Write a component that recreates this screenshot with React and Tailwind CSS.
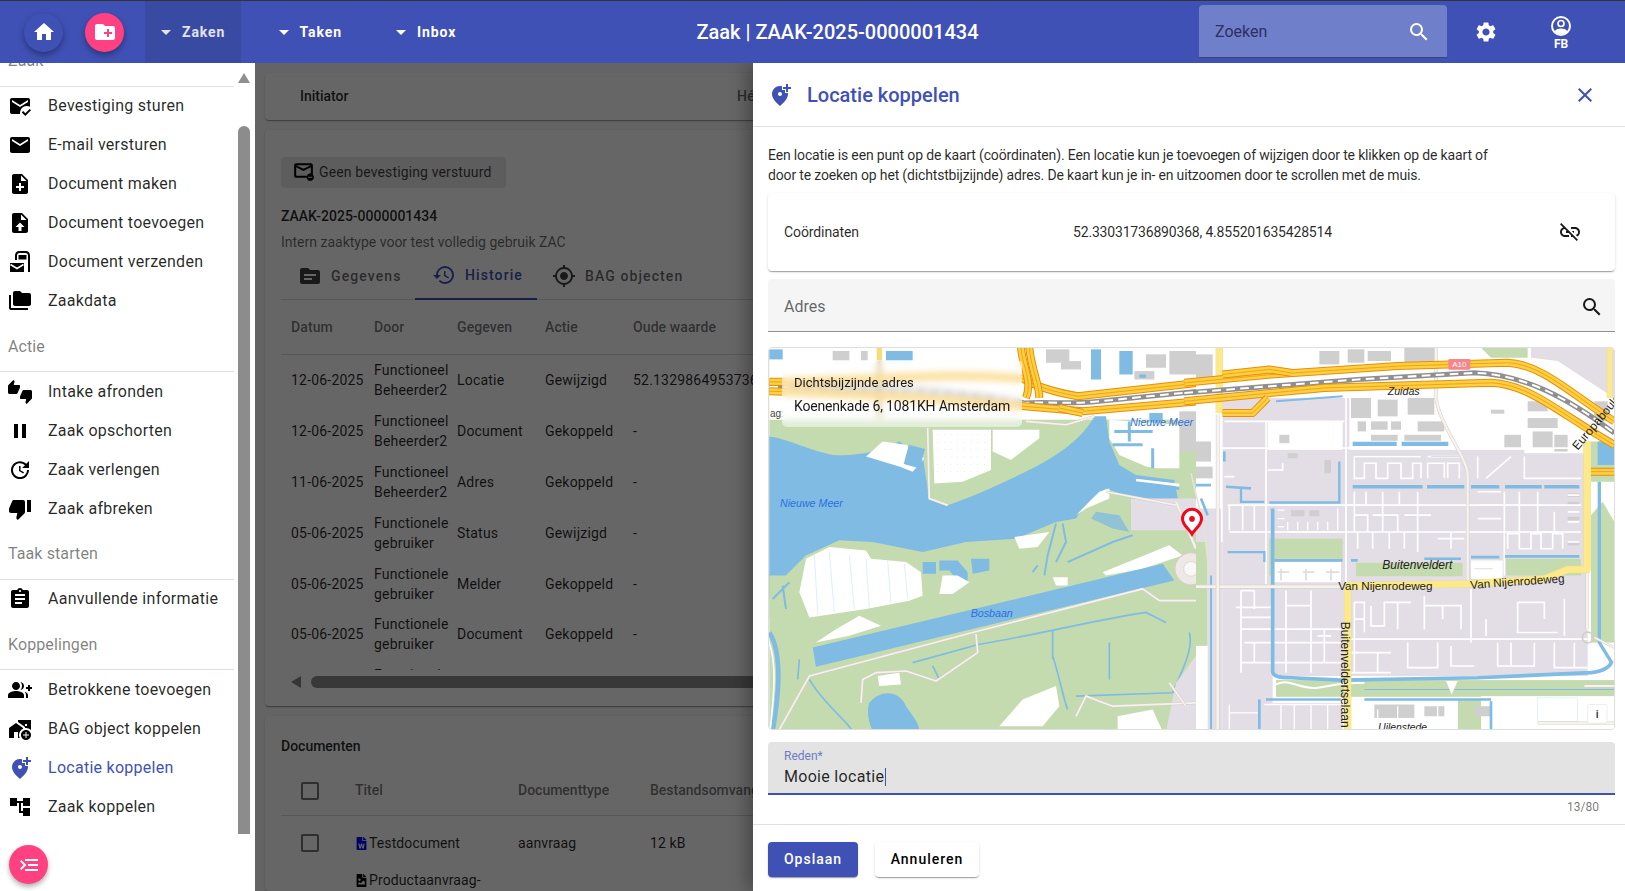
import React from "react";
import {
  MdHome, MdCreateNewFolder, MdMarkEmailRead, MdEmail, MdNoteAdd, MdFolderCopy,
  MdThumbsUpDown, MdPause, MdUpdate, MdThumbDown, MdAssignment, MdGroupAdd, MdAddHomeWork, MdAddLocationAlt,
  MdAccountTree, MdMenuOpen, MdSettings, MdSearch, MdClose, MdLinkOff, MdArrowDropDown,
  MdTopic, MdHistory, MdGpsFixed, MdOutlineUnsubscribe,
} from "react-icons/md";
import { FaFileWord, FaFileImage } from "react-icons/fa";

const W = "#7fbbe3", G = "#c4dbb0", L = "#e3dde6", B = "#cfcfcf";

function UploadDoc({ className }) {
  return (
    <svg viewBox="0 0 24 24" className={className} fill="currentColor">
      <path fillRule="evenodd" d="M14 2H6c-1.1 0-1.99.9-1.99 2L4 20c0 1.1.89 2 1.99 2H18c1.1 0 2-.9 2-2V8l-6-6zm-1 7V3.5L18.5 9H13z M12 11.5 L16.5 16 H13.5 V20 H10.5 V16 H7.5 Z" />
    </svg>
  );
}
function SendDoc({ className }) {
  return (
    <svg viewBox="0 0 24 24" className={className}>
      <path d="M8 10 V6 C8 3.5 9.5 2 11.5 2 H17.5 C19.5 2 21 3.5 21 6 V22" fill="none" stroke="currentColor" strokeWidth="2" />
      <path d="M10.5 5 H18.5 V9.5 H10.5 Z" fill="currentColor" />
      <path d="M2 13 H16 V22 H2 Z" fill="currentColor" />
      <path d="M2.5 14.5 L9 18.5 L15.5 14.5" fill="none" stroke="#fff" strokeWidth="1.5" />
    </svg>
  );
}
function Account({ className }) {
  return (
    <svg viewBox="0 0 24 24" className={className} fill="none" stroke="currentColor">
      <circle cx="12" cy="12" r="9" strokeWidth="2" />
      <circle cx="12" cy="9.5" r="3" strokeWidth="1.7" />
      <path d="M5.5 17.2 C7 15.2 9.5 14.5 12 14.5 S17 15.2 18.5 17.2 C17 19.5 14.5 20.5 12 20.5 S7 19.5 5.5 17.2Z" fill="currentColor" stroke="none" />
    </svg>
  );
}

function Motorway({ d }) {
  return (
    <g fill="none" strokeLinejoin="round">
      <path d={d} stroke="#ea8c0e" strokeWidth="24" />
      <path d={d} stroke="#fdd03f" strokeWidth="18" />
      <path d={d} stroke="#ea8c0e" strokeWidth="2" />
    </g>
  );
}
function Rail({ d }) {
  return (
    <g fill="none">
      <path d={d} stroke="#8f8f8f" strokeWidth="15" />
      <path d={d} stroke="#ffffff" strokeWidth="6" strokeDasharray="26 16" />
    </g>
  );
}
function Road({ d, w = 5 }) {
  return (
    <g fill="none" strokeLinejoin="round">
      <path d={d} stroke="#d6cdc6" strokeWidth={w + 3} />
      <path d={d} stroke="#f6f2ee" strokeWidth={w} />
    </g>
  );
}
function Yellow({ d, w = 18 }) {
  return (
    <g fill="none" strokeLinejoin="round">
      <path d={d} stroke="#e9d98a" strokeWidth={w + 2} />
      <path d={d} stroke="#fbe98c" strokeWidth={w} />
    </g>
  );
}

function rects(list, fill) {
  return list.map((r, i) => <rect key={i} x={r[0]} y={r[1]} width={r[2]} height={r[3]} fill={fill} />);
}

const streetsRight = [
  "M90,320 H1170", "M110,490 H1170", "M115,570 H1170", "M100,240 H460", "M225,240 V725", "M465,160 V740",
  "M115,490 V565", "M155,490 V565", "M190,490 V565", "M230,385 H275 V365", "M100,405 H130", "M490,345 H690", "M710,345 H810",
  "M490,345 V410 H520 V365 H555 V410 H590 V365 H630 V410 H665 V365 H690 V410", "M710,410 V365 H760 V410 M770,410 V365 H805 V410",
  "M860,345 V410 M885,410 L960,345 M1000,345 V410 H1170", "M525,450 V490 M575,450 V490 M625,450 V490 M680,450 V490",
  "M490,450 V570 M490,520 H530 V570 M575,490 V570 M545,520 H620 V570 M680,490 V630 M640,520 H720",
  "M500,570 V620 M545,570 V620 M595,570 V620 M640,570 V620 M740,590 H820 M780,570 V620",
  "M860,450 H930 M860,490 H930 M860,530 H930 M940,450 V700 M985,450 V570 M1040,450 V570 H1100 M1090,510 V570 M1130,460 H1165 M1130,510 H1165 M1130,540 H1165 M1130,600 H1165",
  "M950,620 V575 H985 V620 H1020 V575 H1050 V620 H1085 V575 H1115 V620",
  "M150,745 V990 M230,795 H150 M135,795 H240 M150,860 H450 M150,825 H240 M190,745 H150 M190,745 V800 M285,745 V990 M285,790 H360 M360,745 V990 M160,900 H450 M190,900 V960 M150,960 H450 M400,860 V960 M380,880 H420",
  "M490,780 H520 V870 M490,780 V990 M490,830 H520 M540,790 V850 H580 V780 H660 M620,780 V860 M700,760 V860 M700,790 H810 V860 M755,790 V830 M840,740 V900 M980,780 H1060 V830 M980,780 V870 H1100 M1120,770 V880 M885,830 V880",
  "M480,890 H1190 M480,930 H600 M560,930 V990 M650,900 V975 H740 V900 M780,910 V970 H850 M920,900 V970 H1030 V900 M1090,900 V975 H1190 M960,900 V970 M1150,900 V975 M480,990 H600",
];
const canalsRight = [
  ["M485,435 H695 M708,435 H820 M840,435 H925 M942,435 H1052 M1060,435 H1165", 11],
  ["M485,307 H617 M632,307 H772", 13],
  ["M250,655 H455 M480,655 H500 M700,650 H810 M840,645 H925 M942,643 H1165", 8],
  ["M245,500 V985 C245,1000 260,1005 300,1005 L450,1012 L860,1005 L1200,990 C1240,985 1260,970 1262,955", 11],
  ["M60,700 V1165", 6],
  ["M110,630 H220 V660", 7],
  ["M150,440 V480 H220 M235,482 H445 V360", 7],
  ["M100,330 V360 M105,435 L180,440", 8],
  ["M1225,420 V900 L1262,960", 10],
  ["M225,1070 H450 M520,1070 H900", 8],
  ["M205,1070 V1165 M900,1075 V1165", 8],
  ["M255,180 L455,165", 6],
];

function MapSvg() {
  return (
    <svg viewBox="0 0 845 379" className="block h-full w-full" preserveAspectRatio="none" style={{ fontFamily: '"Liberation Sans", sans-serif' }}>
      <rect width="845" height="379" fill="#fff" />
      <g transform="translate(-3,-7) scale(0.33333)">
        <rect x="10" y="20" width="1290" height="1145" fill={G} />
        <rect x="10" y="20" width="1290" height="215" fill="#fff" />
        {rects([[200, 30, 50, 30], [285, 30, 20, 30], [840, 25, 70, 40], [885, 60, 60, 25], [1140, 40, 60, 40], [1210, 30, 80, 70], [1240, 210, 50, 120], [1105, 90, 60, 25]], B)}
        {rects([[10, 25, 40, 30], [360, 30, 80, 30], [975, 25, 30, 90], [1060, 30, 40, 70], [1120, 100, 20, 10], [1150, 215, 40, 25]], W)}
        <path d="M10,285 C60,290 110,320 200,340 C270,345 340,330 400,300 L470,345 L490,470 L545,490 C640,460 760,400 800,380 C880,340 950,290 985,225 L1020,225 L1030,300 L1060,370 L1110,400 L1225,415 L1240,495 L1100,470 L1020,440 C970,470 950,500 930,530 L870,540 L750,590 L600,600 L470,630 L320,600 L220,595 L120,640 L60,700 L10,770 Z" fill={W} />
        <path d="M1030,235 L1240,250 L1240,380 L1170,380 L1140,375 L1060,340 L1030,290 Z" fill="#fff" />
        <path d="M1045,270 H1160 M1040,310 H1130 M1090,240 V300 M1160,320 V380 M1110,425 L1240,440" stroke={W} strokeWidth="9" fill="none" />
        <path d="M1110,415 L1240,430" stroke="#fff" strokeWidth="8" fill="none" />
        <path d="M500,265 H675 V385 L590,420 L505,425 Z M680,265 H820 V290 L735,355 L680,330 Z" fill="#fff" />
        <g fill="#c4cdc4">
          {Array.from({ length: 48 }).map((_, i) => (
            <circle key={i} cx={515 + (i % 8) * 20} cy={280 + Math.floor(i / 8) * 22} r="1.2" />
          ))}
        </g>
        <path d="M300,345 L350,300 L420,310 L475,350 L440,390 L400,375 Z" fill="#fff" />
        <rect x="420" y="315" width="50" height="60" fill={W} transform="rotate(15 445 345)" />
        <path d="M120,650 L190,615 L300,625 L315,650 L420,660 L465,690 L470,760 L430,775 L300,800 L130,825 L100,750 Z" fill="#fff" />
        <path d="M145,635 L155,815 M190,630 L205,810 M250,640 L265,800 M300,650 L310,795 M365,655 L375,785 M415,665 L425,770" stroke="#cfe5f3" strokeWidth="2" fill="none" />
        <path d="M470,660 H510 V695 H470 Z M520,655 H575 L605,690 V715 H575 L550,685 H520 Z M615,650 H670 V685 L620,695 Z" fill={W} />
        <path d="M530,700 H575 L610,720 L560,755 H520 Z M745,585 L850,570 L815,615 L760,620 Z M860,705 H905 V730 H870 Z M1010,690 L1110,650 L1210,610 L1250,640 L1130,680 L1020,700 Z M150,900 L210,860 L280,820 L345,850 L250,880 Z M930,520 L1000,450 L1030,440 L1030,470 L960,500 Z" fill="#fff" />
        <path d="M870,545 L845,640 L835,700 M890,545 L900,600 L870,660 M905,660 L1040,600 L1100,580 M800,690 L815,670" stroke={W} strokeWidth="6" fill="none" />
        <path d="M975,530 L1040,560 L1090,570 L1060,520 L990,510 Z" fill={W} opacity="0.75" />
        <path d="M140,915 L1190,665 L1225,715 L150,972 Z" fill={W} />
        <path d="M640,905 C800,880 1000,830 1140,810 L1200,840 M860,860 V950 M440,960 L640,905 M860,940 C880,1000 890,1060 905,1100 M1030,900 V1010 M1270,870 C1285,920 1240,1000 1220,1050 L930,1060 M130,1010 C170,1080 240,1130 260,1165 M500,970 L520,1010 M100,950 L95,1010" stroke={W} strokeWidth="5" fill="none" />
        <path d="M10,870 C50,930 40,1050 20,1165" stroke={W} strokeWidth="14" fill="none" />
        <path d="M0,880 C35,940 25,1050 12,1165" stroke="#fff" strokeWidth="5" fill="none" />
        <path d="M10,700 L60,700 L90,670 L60,800 L10,830 Z" fill={G} />
        <path d="M20,770 L70,720 M50,730 L60,800" stroke={W} strokeWidth="6" fill="none" />
        <path d="M310,1080 C340,1040 400,1040 420,1090 C440,1120 460,1140 460,1165 L320,1165 C310,1140 300,1110 310,1080 Z" fill={W} />
        <path d="M335,1000 L400,990 L405,1025 L340,1030 Z M700,1150 L770,1070 L870,1030 L880,1090 L830,1150 Z M1055,1120 L1160,1100 L1190,1165 L1055,1165 Z M1270,1120 L1290,1120 L1290,1165 L1270,1165 Z" fill="#fff" />
        <path d="M1230,1020 L1290,940 L1290,1165 L1200,1165 Z" fill={L} />
        <rect x="1095" y="470" width="195" height="95" fill={L} />
        <Road d="M40,1160 L130,1000 L620,870 L1130,740 L1180,775 L1290,775" />
        <Road d="M630,875 L635,930 L510,1015 L420,985 L330,990 L290,1010 L285,1080" />
        <Road d="M485,260 L490,470 L545,490" />
        <Road d="M1230,480 L1290,620" w={7} />
        <Road d="M1020,450 L1230,490" />
        <Road d="M930,1120 L960,1060 L1040,1090 L1290,1080" />
        <Road d="M1210,1020 L1260,1090 M780,240 L900,250 L985,225" />
        <circle cx="1275" cy="680" r="48" fill="#eee9e4" stroke="#d6cdc6" strokeWidth="3" />
        <circle cx="1275" cy="680" r="22" fill="#f8f8f8" stroke="#d6cdc6" strokeWidth="2" />
        <path d="M340,20 V230" stroke="#f5dd7a" strokeWidth="16" fill="none" />
        <path d="M340,60 V225" stroke="#555" strokeWidth="8" fill="none" opacity="0.6" />
        <Rail d="M10,137 C200,140 500,130 775,185 C850,180 900,190 1000,180 L1300,150" />
        <Motorway d="M10,122 C200,125 500,90 770,112 C800,130 850,150 935,165 L1300,125" />
        <Motorway d="M10,150 C200,155 500,170 775,195 L950,210 L1300,180" />
        <Motorway d="M790,20 C795,80 820,130 820,170" />
        <Motorway d="M765,20 C770,80 800,120 780,170" />
        <Motorway d="M880,200 L950,215" />
        <text x="12" y="228" fontSize="30" fill="#444">ag:</text>
        <text x="42" y="497" fontSize="32" fontStyle="italic" fill="#2e6fe0">Nieuwe Meer</text>
        <text x="1093" y="255" fontSize="32" fontStyle="italic" fill="#2e6fe0">Nieuwe Meer</text>
        <text x="614" y="823" fontSize="32" fontStyle="italic" fill="#2e6fe0">Bosbaan</text>
      </g>
      <g transform="translate(422,-7) scale(0.33333)">
        <rect x="15" y="20" width="1255" height="1145" fill="#fff" />
        <rect x="15" y="500" width="75" height="100" fill={L} />
        <rect x="15" y="600" width="35" height="310" fill={G} />
        <rect x="50" y="600" width="45" height="560" fill={L} />
        <rect x="15" y="240" width="50" height="250" fill="#fff" />
        <rect x="95" y="170" width="1095" height="830" fill={L} />
        <rect x="95" y="1000" width="150" height="165" fill={L} />
        <rect x="100" y="1080" width="355" height="85" fill={L} />
        <rect x="1200" y="300" width="70" height="600" fill={G} />
        <path d="M1200,420 H1270 V540 L1235,480 L1200,520 Z" fill="#fff" />
        <path d="M1200,900 L1262,960 L1200,985 Z" fill="#fff" />
        <rect x="1220" y="300" width="50" height="70" fill={W} />
        <rect x="230" y="240" width="225" height="85" fill="#fff" />
        <rect x="475" y="170" width="530" height="155" fill="#fff" />
        <rect x="775" y="150" width="225" height="130" fill="#fff" />
        <rect x="1000" y="170" width="190" height="165" fill="#fff" />
        <path d="M1020,20 H1270 V170 L1100,60 L1020,50 Z" fill={L} />
        <path d="M870,20 H1010 V50 H900 Z" fill={G} />
        <rect x="250" y="590" width="205" height="60" fill={G} />
        <rect x="235" y="590" width="12" height="110" fill={G} />
        <rect x="495" y="662" width="320" height="40" fill={G} />
        <rect x="945" y="650" width="225" height="50" fill={G} />
        <rect x="250" y="660" width="200" height="60" fill="#fff" />
        <rect x="840" y="655" width="95" height="55" fill="#fff" />
        <rect x="255" y="1012" width="1015" height="50" fill={G} />
        <rect x="800" y="1070" width="120" height="95" fill={G} />
        <rect x="520" y="1075" width="280" height="90" fill="#fff" />
        <rect x="870" y="1060" width="400" height="105" fill="#fff" />
        <rect x="1040" y="1065" width="120" height="70" fill="#fff" stroke="#dcebf5" strokeWidth="2" />
        <path d="M255,1025 C300,1005 320,1040 380,1035 C420,1030 440,1020 520,1020" stroke="#fff" strokeWidth="6" fill="none" />
        <path d="M520,1040 H1270" stroke={W} strokeWidth="3" fill="none" />
        <path d="M765,1015 L782,1055 L800,1015 Z" fill="#fff" />
        {rects([[15, 40, 50, 70], [15, 300, 45, 60], [15, 375, 50, 35], [265, 280, 30, 25], [385, 30, 60, 40], [470, 25, 50, 40], [530, 30, 70, 30], [640, 20, 90, 60], [1210, 180, 40, 60], [480, 170, 60, 60], [560, 175, 60, 50], [650, 170, 80, 50], [500, 240, 25, 30], [540, 240, 50, 25], [600, 240, 30, 25], [680, 240, 80, 30], [540, 280, 80, 18], [640, 280, 110, 18], [1010, 180, 60, 30], [1090, 280, 40, 50], [1025, 270, 60, 50], [940, 280, 50, 40], [1010, 230, 90, 30], [900, 205, 40, 12], [290, 335, 30, 15], [400, 355, 20, 40], [1130, 455, 35, 10], [1130, 480, 35, 10], [1130, 525, 35, 10], [1130, 600, 35, 10], [300, 505, 40, 18], [355, 505, 30, 18], [550, 1085, 120, 40], [700, 1090, 60, 30], [850, 1090, 50, 30]], B)}
        {streetsRight.map((d, i) => (
          <path key={i} d={d} stroke="#fff" strokeWidth="5" fill="none" />
        ))}
        <path d="M260,505 H280 M260,530 H280 M260,555 H280 M290,570 H440 M290,540 V565 M320,540 V565 M350,540 V565 M380,540 V565 M410,540 V565 M440,500 V565" stroke="#fff" strokeWidth="4" fill="none" />
        <path d="M260,690 H295 M335,690 H370 M405,690 H445 M270,680 V715 M345,680 V715 M420,680 V715" stroke="#ddd" strokeWidth="5" fill="none" />
        <path d="M490,340 H690 M490,350 H690 M720,345 H810 M850,680 H905" stroke="#dedede" strokeWidth="3" fill="none" />
        <path d="M115,1085 V1165 M115,1110 H205 M220,1085 H450 M270,1085 V1165 M310,1085 V1165 M360,1085 V1165 M410,1085 V1165 M560,1100 V1165 M620,1090 V1165 M680,1090 V1165 M740,1090 V1165" stroke="#fff" strokeWidth="4" fill="none" />
        {canalsRight.map(([d, w], i) => (
          <path key={i} d={d} stroke={W} strokeWidth={w} fill="none" />
        ))}
        <path d="M0,395 L40,560 L55,700" stroke="#e7e1dc" strokeWidth="5" fill="none" />
        <path d="M15,430 H60 M30,470 L50,520" stroke={W} strokeWidth="8" fill="none" />
        <Road d="M15,733 H455" w={8} />
        <Road d="M80,220 V1165" w={8} />
        <Road d="M735,20 V170 C745,250 830,350 830,400 V720" w={7} />
        <Road d="M1188,680 V860 M1180,1030 H1270 M1040,1140 H1270" w={6} />
        <circle cx="1190" cy="885" r="16" fill="none" stroke="#d6cdc6" strokeWidth="5" />
        <Road d="M1210,885 L1270,915" w={5} />
        <Yellow d="M85,20 V215" w={20} />
        <Yellow d="M1256,20 V170" w={15} />
        <Yellow d="M1188,300 V682 H1130 L1060,710 L830,725 L470,730 V1165" w={20} />
        <Rail d="M-20,155 L500,115 L850,95 C1000,100 1130,170 1270,275" />
        <Motorway d="M-20,125 L240,100 L620,75 L950,65 C1050,70 1130,150 1270,240" />
        <Motorway d="M-20,180 L400,140 L900,125 C1020,130 1110,220 1270,310" />
        <Motorway d="M95,100 L235,85 L300,95" />
        <Motorway d="M230,170 L185,215 H95" />
        <Motorway d="M1200,390 H1270" />
        <rect x="772" y="54" width="66" height="32" rx="4" fill="#f7858b" />
        <text x="805" y="79" textAnchor="middle" fontSize="24" fill="#fff">A10</text>
        <g fill="#222">
          <text x="638" y="162" textAnchor="middle" fontStyle="italic" fontSize="32">Zuidas</text>
          <text x="679" y="680" textAnchor="middle" fontStyle="italic" fontSize="36">Buitenveldert</text>
          <text x="583" y="742" textAnchor="middle" fontSize="35">Van Nijenrodeweg</text>
          <text x="980" y="730" textAnchor="middle" fontSize="35" transform="rotate(-4 980 730)">Van Nijenrodeweg</text>
          <text transform="translate(450,838) rotate(90)" fontSize="36">Buitenveldertselaan</text>
          <text transform="translate(1160,328) rotate(-50)" fontSize="36">Europaboulevard</text>
          <text x="635" y="1163" textAnchor="middle" fontStyle="italic" fontSize="31">Uilenstede</text>
        </g>
        <rect x="1190" y="1085" width="58" height="56" rx="5" fill="#fff" stroke="#e4e4e4" strokeWidth="2" />
        <text x="1219" y="1124" textAnchor="middle" fontSize="34" fill="#333" fontFamily="Roboto, sans-serif" fontWeight="500">i</text>
      </g>
      <g transform="translate(423,161)">
        <path d="M0,24 C-3,19 -9.5,15 -9.5,9 A9.5,9.5 0 1 1 9.5,9 C9.5,15 3,19 0,24 Z" fill="#fff" stroke="#ee0a1c" strokeWidth="3" />
        <circle cx="0" cy="9" r="2.8" fill="#ee0a1c" />
      </g>
    </svg>
  );
}

function SectionHead({ children }) {
  return (
    <div className="h-[51.5px] border-b border-[#e0e0e0] pl-[8px] pt-[16px] text-[16px] leading-[20px] tracking-[0.1px] text-black/50">
      {children}
    </div>
  );
}
function Item({ icon: Icon, children, active }) {
  return (
    <div className={`flex h-[39px] items-center gap-[16px] pl-[8px] text-[16px] tracking-[0.27px] ${active ? "text-[#3f51b5]" : "text-black/85"}`}>
      <Icon className={`size-[24px] shrink-0 ${active ? "text-[#3f51b5]" : "text-black"}`} />
      <span className="whitespace-nowrap">{children}</span>
    </div>
  );
}

function Sidebar() {
  return (
    <aside className="relative z-10 flex w-[255px] shrink-0 overflow-hidden bg-white">
      <div className="-mt-[28px] w-[234px] shrink-0">
        <SectionHead>Zaak</SectionHead>
        <Item icon={MdMarkEmailRead}>Bevestiging sturen</Item>
        <Item icon={MdEmail}>E-mail versturen</Item>
        <Item icon={MdNoteAdd}>Document maken</Item>
        <Item icon={UploadDoc}>Document toevoegen</Item>
        <Item icon={SendDoc}>Document verzenden</Item>
        <Item icon={MdFolderCopy}>Zaakdata</Item>
        <SectionHead>Actie</SectionHead>
        <Item icon={MdThumbsUpDown}>Intake afronden</Item>
        <Item icon={MdPause}>Zaak opschorten</Item>
        <Item icon={MdUpdate}>Zaak verlengen</Item>
        <Item icon={MdThumbDown}>Zaak afbreken</Item>
        <SectionHead>Taak starten</SectionHead>
        <Item icon={MdAssignment}>Aanvullende informatie</Item>
        <SectionHead>Koppelingen</SectionHead>
        <Item icon={MdGroupAdd}>Betrokkene toevoegen</Item>
        <Item icon={MdAddHomeWork}>BAG object koppelen</Item>
        <Item icon={MdAddLocationAlt} active>Locatie koppelen</Item>
        <Item icon={MdAccountTree}>Zaak koppelen</Item>
      </div>
      <div className="ml-[4px] flex w-[12px] shrink-0 flex-col items-center">
        <svg viewBox="0 0 12 10" className="mt-[10px] h-[10px] w-[12px]"><path d="M6 0 L12 10 H0 Z" fill="#8f8f8f" /></svg>
        <div className="mt-[43px] h-[708px] w-[12px] rounded-t-[6px] bg-[#8c8c8c]" />
      </div>
      <button className="absolute bottom-[7px] left-[9px] flex size-[39px] items-center justify-center rounded-full bg-[#ff4081] text-white shadow-[0_3px_5px_rgba(0,0,0,0.3)]">
        <MdMenuOpen className="size-[24px] -scale-x-100" />
      </button>
    </aside>
  );
}

const history = [
  ["12-06-2025", "Functioneel Beheerder2", "Locatie", "Gewijzigd", "52.13298649537361, 4.9012345"],
  ["12-06-2025", "Functioneel Beheerder2", "Document", "Gekoppeld", "-"],
  ["11-06-2025", "Functioneel Beheerder2", "Adres", "Gekoppeld", "-"],
  ["05-06-2025", "Functionele gebruiker", "Status", "Gewijzigd", "-"],
  ["05-06-2025", "Functionele gebruiker", "Melder", "Gekoppeld", "-"],
  ["05-06-2025", "Functionele gebruiker", "Document", "Gekoppeld", "-"],
  ["05-06-2025", "Functionele gebruiker", "Zaak", "Gekoppeld", "-"],
];

const cardShadow = "shadow-[0_2px_1px_-1px_rgba(0,0,0,0.2),0_1px_1px_0_rgba(0,0,0,0.14),0_1px_3px_0_rgba(0,0,0,0.12)]";

function Tab({ icon: Icon, label, w, pl, active }) {
  return (
    <div className={`flex h-[48px] ${w} ${pl} items-center gap-[9px] text-[14px] font-medium tracking-[1.1px] ${active ? "-mb-px border-b-2 border-[#3f51b5] text-[#3f51b5]" : "text-black/60"}`}>
      <Icon className={`size-[24px] ${active ? "text-[#3f51b5]" : "text-black/75"}`} />
      <span>{label}</span>
    </div>
  );
}

function Checkbox() {
  return <div className="ml-[20px] size-[18px] rounded-[2px] border-2 border-black/55" />;
}

function MainContent() {
  return (
    <div className="absolute inset-0 flex w-[1350px] flex-col gap-[10px] bg-[#fafafa] pl-[10px] pt-[10px] text-[14px] tracking-[0.2px] text-black/85">
      <section className={`flex h-[47px] shrink-0 items-center rounded-[4px] bg-white ${cardShadow}`}>
        <span className="ml-[35px] w-[437px] font-medium tracking-normal">Initiator</span>
        <span className="font-medium text-black/60">Héctor</span>
      </section>
      <section className={`h-[576px] shrink-0 rounded-[4px] bg-white pl-[16px] pt-[27px] ${cardShadow}`}>
        <div className="flex h-[31px] w-[225px] items-center gap-[3px] rounded-[4px] bg-[#e8e8e8] pl-[10px] tracking-[0.13px]">
          <MdOutlineUnsubscribe className="size-[25px] text-black" />
          <span className="text-black/75">Geen bevestiging verstuurd</span>
        </div>
        <div className="mt-[18px] h-[20px] font-medium leading-[20px] tracking-normal">ZAAK-2025-0000001434</div>
        <div className="mt-[6px] h-[20px] leading-[20px] tracking-normal text-black/60">Intern zaaktype voor test volledig gebruik ZAC</div>
        <div className="h-[418px] overflow-hidden">
          <div className="flex h-[48px] border-b border-black/15">
            <Tab icon={MdTopic} label="Gegevens" w="w-[134px]" pl="pl-[17px]" />
            <Tab icon={MdHistory} label="Historie" w="w-[122px]" pl="pl-[17px]" active />
            <Tab icon={MdGpsFixed} label="BAG objecten" w="w-[170px]" pl="pl-[15px]" />
          </div>
          <div className="grid h-[55px] grid-cols-[83px_83px_88px_88px_1fr] items-center border-b border-black/15 pl-[10px] font-medium tracking-[0.1px] text-black/55">
            <span>Datum</span><span>Door</span><span>Gegeven</span><span>Actie</span><span>Oude waarde</span>
          </div>
          {history.map((r, i) => (
            <div key={i} className="grid h-[50.8px] grid-cols-[83px_83px_88px_88px_1fr] items-center pl-[10px] leading-[20px]">
              <span>{r[0]}</span>
              <span className="w-[80px]">{r[1]}</span>
              <span>{r[2]}</span>
              <span>{r[3]}</span>
              <span className="whitespace-nowrap">{r[4]}</span>
            </div>
          ))}
        </div>
        <div className="mt-[6px] flex h-[12px] items-center gap-[10px] pl-[10px]">
          <svg viewBox="0 0 10 12" className="h-[12px] w-[10px]"><path d="M0 6 L10 0 V12 Z" fill="#888" /></svg>
          <div className="h-[12px] w-[900px] rounded-[6px] bg-[#8c8c8c]" />
        </div>
      </section>
      <section className={`flex-1 rounded-[4px] bg-white pl-[16px] pt-[20px] tracking-[0.1px] ${cardShadow}`}>
        <div className="h-[20px] font-medium leading-[20px] tracking-normal">Documenten</div>
        <div className="grid h-[60px] grid-cols-[74px_163px_132px_1fr] items-center border-b border-black/15 pt-[10px] font-medium tracking-normal text-black/55">
          <Checkbox /><span>Titel</span><span>Documenttype</span><span className="whitespace-nowrap">Bestandsomvang</span>
        </div>
        <div className="grid h-[54px] grid-cols-[74px_163px_132px_1fr] items-center">
          <Checkbox />
          <span className="flex items-center gap-[1px]"><FaFileWord className="size-[13px] text-[#0000ff]" />Testdocument</span>
          <span>aanvraag</span>
          <span>12 kB</span>
        </div>
        <div className="grid h-[12px] grid-cols-[74px_163px_132px_1fr] items-center">
          <span />
          <span className="flex items-center gap-[1px]"><FaFileImage className="size-[13px] text-black" />Productaanvraag-</span>
        </div>
      </section>
    </div>
  );
}

function Drawer() {
  return (
    <div className="absolute bottom-0 right-0 top-0 flex w-[872px] flex-col bg-white text-[14px] text-black/85 shadow-[-8px_0_15px_rgba(0,0,0,0.25)]">
      <header className="flex h-[64px] shrink-0 items-center border-b border-[#e0e0e0] pl-[15px] pr-[28px]">
        <MdAddLocationAlt className="size-[24px] text-[#3f51b5]" />
        <h1 className="ml-[15px] text-[20px] font-medium text-[#3f51b5]">Locatie koppelen</h1>
        <MdClose className="ml-auto size-[24px] text-[#3f51b5]" />
      </header>
      <div className="pl-[15px] pr-[10px]">
        <p className="mt-[18px] w-[735px] leading-[20px] tracking-[-0.16px]">
          Een locatie is een punt op de kaart (coördinaten). Een locatie kun je toevoegen of wijzigen door te klikken op de kaart of door te zoeken op het (dichtstbijzijnde) adres. De kaart kun je in- en uitzoomen door te scrollen met de muis.
        </p>
        <div className={`mt-[8px] flex h-[78px] items-center rounded-[4px] bg-white pl-[16px] pr-[33px] ${cardShadow}`}>
          <span className="w-[289px] tracking-[-0.1px]">Coördinaten</span>
          <span className="tracking-[-0.18px]">52.33031736890368, 4.855201635428514</span>
          <MdLinkOff className="ml-auto size-[24px] text-black/90" />
        </div>
        <div className="mt-[8px] flex h-[53px] items-center rounded-t-[4px] border-b border-[#8f8f8f] bg-[#f5f5f5] pl-[16px] pr-[11px] pt-[3px] text-[16px] text-black/60">
          <span>Adres</span>
          <MdSearch className="ml-auto size-[24px] text-black/90" />
        </div>
        <div className="relative mt-[15px] h-[383px] overflow-hidden rounded-[4px] border border-[#dedede]">
          <MapSvg />
          <div className="absolute left-[13px] top-[12px] flex h-[67px] w-[240px] flex-col justify-center gap-[5px] rounded-[5px] bg-white/50 pl-[12px] pt-[2px] text-black/90 backdrop-blur-[3px]">
            <span className="whitespace-nowrap text-[13px] leading-[19px]">Dichtsbijzijnde adres</span>
            <span className="whitespace-nowrap leading-[19px] tracking-[-0.17px]">Koenenkade 6, 1081KH Amsterdam</span>
          </div>
        </div>
        <div className="mt-[12px] flex h-[53px] flex-col rounded-t-[4px] border-b-2 border-[#3f51b5] bg-[#e3e3e3] pl-[16px]">
          <span className="mt-[6px] text-[12px] leading-[16px] text-[#6c7bc9]">Reden*</span>
          <span className="mt-[3px] flex h-[20px] items-center text-[16px] leading-[20px] tracking-[0.3px]">Mooie locatie<span className="ml-px h-[18px] w-px bg-[#3f51b5]" /></span>
        </div>
        <div className="mt-[4px] pr-[16px] text-right text-[12px] leading-[16px] text-black/55">13/80</div>
      </div>
      <footer className="mt-[9px] flex gap-[17px] border-t border-[#e0e0e0] pl-[15px] pt-[17px]">
        <button className={`h-[35px] w-[90px] rounded-[4px] bg-[#3f51b5] text-[14px] font-medium tracking-[1px] text-white ${cardShadow}`}>Opslaan</button>
        <button className={`h-[35px] w-[104px] rounded-[4px] bg-white text-[14px] font-medium tracking-[1px] text-black ${cardShadow}`}>Annuleren</button>
      </footer>
    </div>
  );
}

function NavBtn({ label, active }) {
  return (
    <div className={`flex h-full w-[96px] items-center gap-[4px] pl-[9px] text-[14px] font-bold tracking-[0.9px] ${active ? "bg-[#394aa3] text-white/85" : "text-white"}`}>
      <MdArrowDropDown className="size-[24px]" />
      <span>{label}</span>
    </div>
  );
}

export default function App() {
  return (
    <div className="flex h-[891px] w-[1625px] flex-col overflow-hidden border-t border-[#333] bg-white" style={{ fontFamily: "Roboto, sans-serif" }}>
      <header className="relative z-20 flex h-[62px] shrink-0 items-center bg-[#3f51b5] text-white">
        <div className="ml-[24px] flex size-[39px] items-center justify-center rounded-full bg-[#3f51b5] shadow-[0_3px_6px_rgba(0,0,0,0.35)]"><MdHome className="size-[24px]" /></div>
        <div className="ml-[22px] flex size-[39px] items-center justify-center rounded-full bg-[#ff4081] shadow-[0_3px_6px_rgba(0,0,0,0.35)]"><MdCreateNewFolder className="size-[24px]" /></div>
        <div className="ml-[21px] flex h-full gap-[21.5px]">
          <NavBtn label="Zaken" active />
          <NavBtn label="Taken" />
          <NavBtn label="Inbox" />
        </div>
        <div className="flex-1 text-center text-[20px] font-medium">Zaak | ZAAK-2025-0000001434</div>
        <div className="-mt-px flex h-[53px] w-[248px] items-center rounded-t-[4px] border-b border-[#3a4478] bg-[#6f7fca] pl-[16px] pr-[16px] pt-[2px] text-[16px] text-[#2c3160]">
          <span>Zoeken</span>
          <MdSearch className="ml-auto size-[24px] text-white" />
        </div>
        <MdSettings className="ml-[27px] size-[24px]" />
        <div className="ml-[51px] mr-[52px] flex w-[24px] flex-col items-center">
          <Account className="size-[24px]" />
          <span className="text-[12px] font-bold leading-[13px]">FB</span>
        </div>
      </header>
      <div className="flex min-h-0 flex-1">
        <Sidebar />
        <main className="relative flex-1 overflow-hidden">
          <MainContent />
          <div className="absolute inset-0 bg-black/60" />
          <Drawer />
        </main>
      </div>
    </div>
  );
}
